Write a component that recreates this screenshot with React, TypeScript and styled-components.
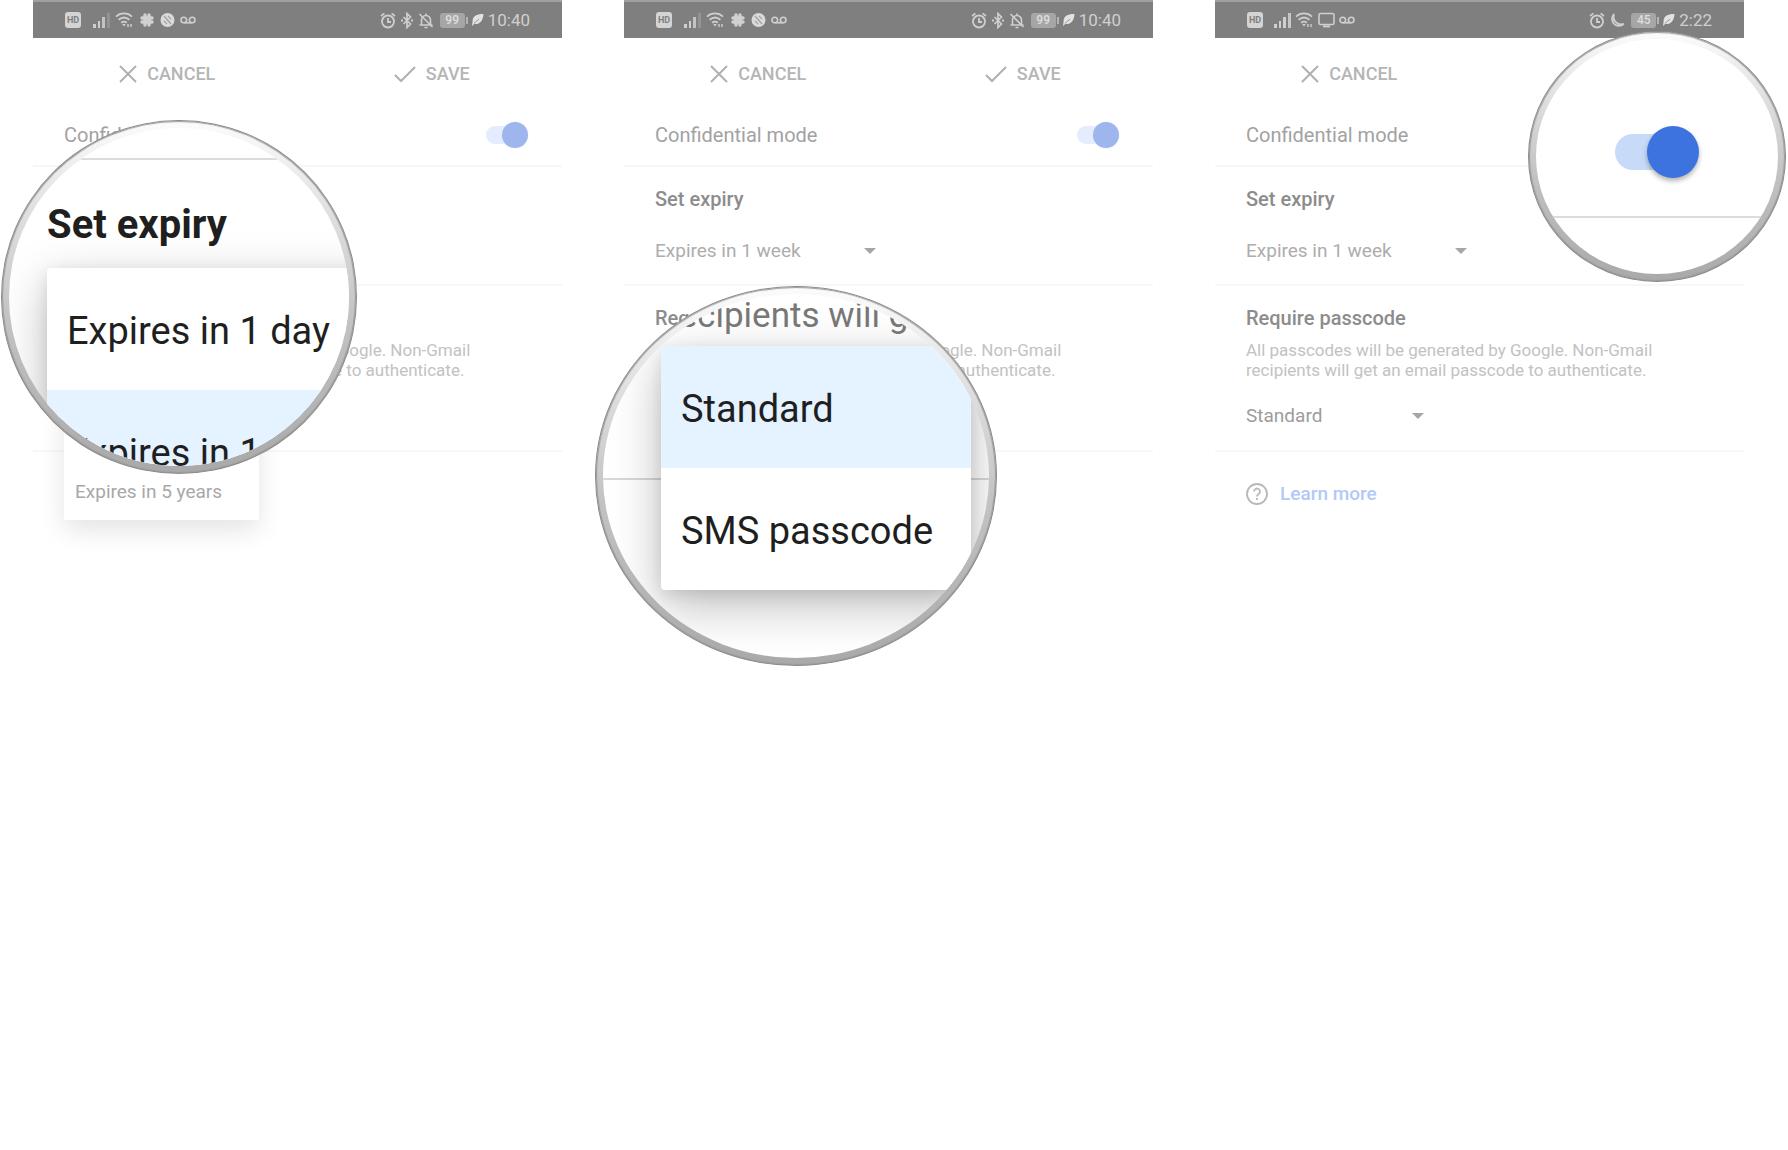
import React, { useId, useState } from "react";
import styled, { createGlobalStyle, css } from "styled-components";

const GlobalStyle = createGlobalStyle`
  *, *::before, *::after { box-sizing: border-box; }
  body {
    margin: 0;
    background: #ffffff;
    font-family: Roboto, "Liberation Sans", sans-serif;
    color: #8a8a8a;
  }
  button, select, input { font: inherit; color: inherit; }
  ul, p, h2 { margin: 0; padding: 0; }
  ul { list-style: none; }
`;

/* ---------- page ---------- */

const Board = styled.main`
  display: grid;
  grid-template-columns: repeat(3, minmax(0, 1fr));
  gap: 62px;
  padding: 0 44px 0 33px;
  min-height: 100vh;
`;

const Phone = styled.section`
  position: relative;
  min-width: 0;
`;

/* ---------- status bar ---------- */

const StatusBar = styled.header`
  display: flex;
  align-items: center;
  justify-content: space-between;
  height: 38px;
  padding: 0 32px;
  border-top: 2px solid #a0a0a0;
  background: #7f7f7f;
  color: #cfcfcf;
`;

const StatusGroup = styled.div<{ $gap: number }>`
  display: flex;
  align-items: center;
  gap: ${(p) => p.$gap}px;
  svg { display: block; }
`;

const Clock = styled.span`
  font-size: 17px;
  line-height: 20px;
`;

const Badge = styled.span`
  display: block;
  margin-right: 7px;
  width: 16px;
  height: 16px;
  border-radius: 3px;
  background: #d4d4d4;
  color: #7f7f7f;
  font-size: 9px;
  font-weight: 700;
  line-height: 16px;
  text-align: center;
`;

const Battery = styled.span`
  position: relative;
  width: 25px;
  height: 15px;
  margin: 0 2px;
  border-radius: 3px;
  background: #a6a6a6;
  color: #dedede;
  font-size: 12px;
  font-weight: 500;
  line-height: 15px;
  text-align: center;
  &::after {
    content: "";
    position: absolute;
    top: 4px;
    right: -3px;
    width: 2px;
    height: 7px;
    background: #b4b4b4;
  }
`;

const Signal = ({ full }: { full?: boolean }) => (
  <svg width="17" height="16" viewBox="0 0 17 16" fill="#cfcfcf">
    <rect x="0" y="12" width="3" height="4" />
    <rect x="5" y="9" width="2" height="7" />
    <rect x="9" y="5" width="3" height="11" opacity={full ? 1 : 0.85} />
    <rect x="14" y="1" width="3" height="15" opacity={full ? 0.9 : 0.25} />
  </svg>
);

const Wifi = () => (
  <svg width="19" height="16" viewBox="0 0 19 16" fill="none" stroke="#cfcfcf" strokeWidth="1.8">
    <path d="M1 4.6C5.6 .4 12.400 .4 17 4.600" />
    <path d="M3.600 7.800C7 4.900 11 4.900 14.400 7.800" />
    <path d="M6.200 10.700C8 9.300 10 9.300 11.800 10.700" />
    <path d="M7.200 12h3.600L9 14.600z" fill="#cfcfcf" stroke="none" />
    <path d="M13 15v-3M16 12v3" strokeWidth="1.400" />
  </svg>
);

const Slack = () => (
  <svg width="16" height="16" viewBox="0 0 16 16" stroke="#d2d2d2" strokeWidth="3.400" strokeLinecap="round">
    <path d="M6 3v10M10 3v10M3 6h10M3 10h10" />
  </svg>
);

const NoEntry = () => (
  <svg width="15" height="16" viewBox="0 0 15 16">
    <circle cx="7.500" cy="8" r="7" fill="#dadada" />
    <path d="M4 4l7 8M8 3.800l3 3.400M4 8.800l3 3.400" stroke="#a2a2a2" strokeWidth="1.200" />
  </svg>
);

const Screen = () => (
  <svg width="17" height="16" viewBox="0 0 17 16" fill="none" stroke="#cfcfcf" strokeWidth="1.600">
    <rect x="1" y="1.500" width="15" height="11" rx="1.500" />
    <path d="M5 14.400h7" strokeWidth="2" />
  </svg>
);

const Voicemail = () => (
  <svg width="16" height="16" viewBox="0 0 16 16" fill="none" stroke="#cfcfcf" strokeWidth="1.600">
    <circle cx="3.800" cy="8" r="2.800" />
    <circle cx="12.200" cy="8" r="2.800" />
    <path d="M3.800 10.800h8.400" />
  </svg>
);

const Alarm = () => (
  <svg width="16" height="17" viewBox="0 0 16 17" fill="none" stroke="#cfcfcf" strokeWidth="1.800">
    <circle cx="8" cy="9.500" r="6" />
    <path d="M8 6v4h3M1 4L4.400 1.400M15 4L11.600 1.400" />
  </svg>
);

const Bluetooth = () => (
  <svg width="14" height="17" viewBox="0 0 14 17" fill="none" stroke="#cfcfcf" strokeWidth="1.700">
    <path d="M3.500 5l7 7L7 15.500v-14L10.500 5l-7 7" />
    <path d="M1 8.500h2M11 8.500h2" strokeWidth="2" />
  </svg>
);

const BellOff = () => (
  <svg width="16" height="17" viewBox="0 0 16 17" fill="none" stroke="#cfcfcf" strokeWidth="1.600">
    <path d="M3.500 12.500V8a4.500 4.500 0 0 1 9 0v4.500M1.500 13h13M6.500 15.500h3M8 1.500v2M1.500 2l13 13" />
  </svg>
);

const Moon = () => (
  <svg width="16" height="17" viewBox="0 0 16 17" fill="none" stroke="#cfcfcf" strokeWidth="1.800">
    <path d="M5 2.200A6.800 6.800 0 1 0 14.800 11.800A7.600 7.600 0 0 1 5 2.200z" />
  </svg>
);

const Leaf = () => (
  <svg width="13" height="14" viewBox="0 0 13 14">
    <path d="M12.500 1C6 .8 1.500 3 1.600 8.200L1 13l2.200-2C9 11.500 12 8 12.500 1z" fill="#e2e2e2" />
    <path d="M3 10.500L8 6" stroke="#9a9a9a" strokeWidth="1" />
  </svg>
);

/* ---------- form parts ---------- */

const Actions = styled.div`
  display: grid;
  grid-template-columns: 1fr 1fr;
  height: 69px;
  padding-top: 2px;
`;

const ActionButton = styled.button`
  display: flex;
  align-items: center;
  justify-content: center;
  gap: 10px;
  border: 0;
  padding: 0 0 0 4px;
  background: none;
  color: #b5b5b5;
  font-size: 18px;
  font-weight: 500;
  line-height: 24px;
  cursor: pointer;
`;

const rowLine = css`
  border-bottom: 2px solid #f7f7f7;
`;

const ModeRow = styled.label`
  display: flex;
  align-items: center;
  justify-content: space-between;
  height: 60px;
  padding: 0 34px 2px 31px;
  font-size: 20px;
  line-height: 24px;
  color: #a2a2a2;
  ${rowLine}
`;

const Switch = styled.input.attrs({ type: "checkbox", role: "switch" })<{ $large?: boolean }>`
  appearance: none;
  flex: none;
  display: grid;
  align-items: center;
  justify-items: end;
  margin: 0;
  width: ${(p) => (p.$large ? 84 : 42)}px;
  height: ${(p) => (p.$large ? 52 : 26)}px;
  cursor: pointer;
  &::before, &::after {
    content: "";
    grid-area: 1 / 1;
  }
  &::before {
    justify-self: stretch;
    height: ${(p) => (p.$large ? 36 : 18)}px;
    margin-right: ${(p) => (p.$large ? 12 : 6)}px;
    border-radius: 18px;
    background: ${(p) => (p.$large ? "#c7dbf8" : "#e3edfd")};
  }
  &::after {
    width: ${(p) => (p.$large ? 52 : 26)}px;
    height: ${(p) => (p.$large ? 52 : 26)}px;
    border-radius: 50%;
    background: ${(p) => (p.$large ? "#3d73de" : "#9eb6ed")};
    box-shadow: ${(p) => (p.$large ? "0 3px 5px rgba(0, 0, 0, 0.3)" : "0 0 2px #dfe8fb")};
  }
  &:not(:checked) { justify-items: start; }
`;

const Field = styled.div<{ $bottom: number }>`
  display: flex;
  flex-direction: column;
  align-items: flex-start;
  padding: 20px 31px ${(p) => p.$bottom}px;
  ${rowLine}
`;

const FieldTitle = styled.label<{ $covered?: boolean }>`
  visibility: ${(p) => (p.$covered ? "hidden" : "visible")};
  font-size: 20px;
  font-weight: 500;
  line-height: 24px;
  color: #8c8c8c;
`;

const Note = styled.p`
  margin-top: 10px;
  max-width: 440px;
  font-size: 17px;
  line-height: 20px;
  color: #c2c2c2;
`;

const SelectBox = styled.div<{ $width: number; $top: number; $covered?: boolean }>`
  display: grid;
  align-items: center;
  width: ${(p) => p.$width}px;
  margin-top: ${(p) => p.$top}px;
  visibility: ${(p) => (p.$covered ? "hidden" : "visible")};
  svg, select { grid-area: 1 / 1; }
  svg { justify-self: end; pointer-events: none; }
`;

const Select = styled.select<{ $dark?: boolean }>`
  appearance: none;
  width: 100%;
  height: 24px;
  border: 0;
  padding: 0;
  background: none;
  font-size: 19px;
  line-height: 24px;
  color: ${(p) => (p.$dark ? "#9c9c9c" : "#adadad")};
`;

const Caret = () => (
  <svg width="12" height="6" viewBox="0 0 12 6">
    <path d="M0 0h12L6 6z" fill="#a6a6a6" />
  </svg>
);

const LearnMore = styled.a<{ $covered?: boolean }>`
  display: inline-flex;
  align-items: center;
  gap: 12px;
  margin: 30px 31px;
  visibility: ${(p) => (p.$covered ? "hidden" : "visible")};
  font-size: 19px;
  font-weight: 500;
  line-height: 24px;
  color: #b3c9f7;
  text-decoration: none;
`;

/* ---------- menus ---------- */

const Menu = styled.ul<{ $large?: boolean }>`
  border-radius: ${(p) => (p.$large ? 4 : 2)}px;
  background: #ffffff;
  box-shadow: ${(p) =>
    p.$large
      ? "0 16px 50px rgba(0, 0, 0, 0.26), 0 4px 16px rgba(0, 0, 0, 0.1)"
      : "0 10px 26px rgba(0, 0, 0, 0.11)"};
`;

const MenuItem = styled.button<{ $large?: boolean; $active?: boolean }>`
  display: block;
  width: 100%;
  height: ${(p) => (p.$large ? 122 : 60)}px;
  border: 0;
  padding: ${(p) => (p.$large ? "4px 20px 0" : "4px 11px 0")};
  background: ${(p) => (p.$active ? "#e5f2ff" : "transparent")};
  font-size: ${(p) => (p.$large ? 38 : 19)}px;
  line-height: ${(p) => (p.$large ? 44 : 24)}px;
  color: ${(p) => (p.$large ? "#1f1f1f" : "#a8a8a8")};
  text-align: left;
  white-space: nowrap;
`;

const PhoneMenu = styled.div`
  position: absolute;
  top: 220px;
  left: 31px;
  width: 195px;
  li:not(:last-child) { visibility: hidden; }
`;

/* ---------- magnifier ---------- */

const Lens = styled.div<{ $x: number; $y: number; $w: number; $h: number }>`
  position: absolute;
  z-index: 2;
  left: ${(p) => p.$x}px;
  top: ${(p) => p.$y}px;
  width: ${(p) => p.$w}px;
  height: ${(p) => p.$h}px;
  padding: 7px;
  border: 1px solid #8b8b8b;
  border-radius: 50%;
  background: linear-gradient(#fcfcfc 0%, #e6e6e6 20%, #c4c4c4 55%, #a9a9a9 100%);
  box-shadow: inset 0 0 1px 1px #9c9c9c;
`;

const Glass = styled.div`
  display: flex;
  flex-direction: column;
  width: 100%;
  height: 100%;
  overflow: hidden;
  border-radius: 50%;
  background: #ffffff;
`;

const GlassRule = styled.div<{ $top: number }>`
  flex: none;
  height: 2px;
  margin-top: ${(p) => p.$top}px;
  background: #dcdcdc;
`;

const GlassTitle = styled.h2`
  margin: 41px 0 0 38px;
  font-size: 40px;
  font-weight: 700;
  line-height: 48px;
  color: #1f1f1f;
`;

const GlassNote = styled.p`
  margin-left: 64px;
  font-size: 35px;
  line-height: 44px;
  color: #777777;
  white-space: nowrap;
`;

const GlassMenu = styled.div<{ $left: number; $top: number; $width: number }>`
  flex: none;
  width: ${(p) => p.$width}px;
  margin: ${(p) => p.$top}px 0 0 ${(p) => p.$left}px;
`;

const GlassBackdrop = styled.div`
  flex: 1;
  background: linear-gradient(#d8d8d8, #d8d8d8) 0 184px / 100% 2px no-repeat;
`;

const GlassSwitch = styled.div`
  flex: none;
  display: flex;
  padding: 87px 0 0 79px;
`;

/* ---------- composition ---------- */

const EXPIRY = ["Expires in 1 day", "Expires in 1 week", "Expires in 1 month", "Expires in 3 months", "Expires in 5 years"];
const PASSCODE = ["Standard", "SMS passcode"];

type Part = "expiry" | "passcodeTitle" | "passcode" | "learn";

function Options({ items, active, large, label }: { items: string[]; active?: string; large?: boolean; label: string }) {
  return (
    <Menu $large={large} aria-label={label}>
      {items.map((item) => (
        <li key={item}>
          <MenuItem type="button" $large={large} $active={item === active}>
            {item}
          </MenuItem>
        </li>
      ))}
    </Menu>
  );
}

function Status({ late }: { late?: boolean }) {
  return (
    <StatusBar>
      <StatusGroup $gap={late ? 4 : 5}>
        <Badge>HD</Badge>
        <Signal full={late} />
        <Wifi />
        {late ? <Screen /> : <><Slack /><NoEntry /></>}
        <Voicemail />
      </StatusGroup>
      <StatusGroup $gap={4}>
        <Alarm />
        {late ? <Moon /> : <><Bluetooth /><BellOff /></>}
        <Battery>{late ? "45" : "99"}</Battery>
        <Leaf />
        <Clock>{late ? "2:22" : "10:40"}</Clock>
      </StatusGroup>
    </StatusBar>
  );
}

/* `covered` lists the parts that lie entirely under an open menu or a magnifier. */
function ConfidentialScreen({ late, covered = [], children }: { late?: boolean; covered?: Part[]; children?: React.ReactNode }) {
  const id = useId();
  const [on, setOn] = useState(true);
  const under = (part: Part) => covered.includes(part);
  return (
    <Phone>
      <Status late={late} />
      <Actions>
        <ActionButton type="button">
          <svg width="18" height="18" viewBox="0 0 18 18" stroke="#b0b0b0" strokeWidth="2">
            <path d="M1 1l16 16M17 1L1 17" />
          </svg>
          CANCEL
        </ActionButton>
        <ActionButton type="button">
          <svg width="22" height="18" viewBox="0 0 22 18" fill="none" stroke="#b0b0b0" strokeWidth="2">
            <path d="M1 10l6 6L21 2" />
          </svg>
          SAVE
        </ActionButton>
      </Actions>
      <ModeRow>
        Confidential mode
        <Switch checked={on} onChange={(e) => setOn(e.target.checked)} />
      </ModeRow>
      <Field $bottom={21}>
        <FieldTitle $covered={under("expiry")} htmlFor={id + "e"}>Set expiry</FieldTitle>
        <SelectBox $covered={under("expiry")} $width={221} $top={28}>
          <Select id={id + "e"} defaultValue={EXPIRY[1]}>
            {EXPIRY.map((o) => <option key={o}>{o}</option>)}
          </Select>
          <Caret />
        </SelectBox>
      </Field>
      <Field $bottom={22}>
        <FieldTitle $covered={under("passcodeTitle")} htmlFor={id + "p"}>Require passcode</FieldTitle>
        <Note>
          All passcodes will be generated by Google. Non-Gmail recipients will get an email passcode to authenticate.
        </Note>
        <SelectBox $covered={under("passcode")} $width={178} $top={24}>
          <Select id={id + "p"} $dark defaultValue={PASSCODE[0]}>
            {PASSCODE.map((o) => <option key={o}>{o}</option>)}
          </Select>
          <Caret />
        </SelectBox>
      </Field>
      <LearnMore $covered={under("learn")} href="#learn-more">
        <svg width="22" height="22" viewBox="0 0 22 22" fill="none" stroke="#b8b8b8" strokeWidth="1.800">
          <circle cx="11" cy="11" r="10" />
          <path d="M8 8.600a3 3 0 1 1 4.600 2.500c-1.100.8-1.600 1.300-1.600 2.500M11 15v2" />
        </svg>
        Learn more
      </LearnMore>
      {children}
    </Phone>
  );
}

export default function App() {
  const [on, setOn] = useState(true);
  return (
    <>
      <GlobalStyle />
      <Board>
        <ConfidentialScreen covered={["expiry", "passcodeTitle", "passcode", "learn"]}>
          <PhoneMenu>
            <Options label="Expiry" items={EXPIRY} active={EXPIRY[1]} />
          </PhoneMenu>
          <Lens $x={-32} $y={120} $w={356} $h={354}>
            <Glass>
              <GlassRule $top={30} />
              <GlassTitle>Set expiry</GlassTitle>
              <GlassMenu $left={38} $top={19} $width={392}>
                <Options large label="Expiry, magnified" items={EXPIRY.slice(0, 2)} active={EXPIRY[1]} />
              </GlassMenu>
            </Glass>
          </Lens>
        </ConfidentialScreen>

        <ConfidentialScreen covered={["passcode", "learn"]}>
          <Lens $x={-29} $y={286} $w={402} $h={380}>
            <Glass>
              <GlassBackdrop>
                <GlassNote>recipients will get</GlassNote>
                <GlassMenu $left={58} $top={8} $width={310}>
                  <Options large label="Passcode, magnified" items={PASSCODE} active={PASSCODE[0]} />
                </GlassMenu>
              </GlassBackdrop>
            </Glass>
          </Lens>
        </ConfidentialScreen>

        <ConfidentialScreen late>
          <Lens $x={313} $y={31} $w={258} $h={251}>
            <Glass>
              <GlassSwitch>
                <Switch $large aria-label="Confidential mode, magnified" checked={on} onChange={(e) => setOn(e.target.checked)} />
              </GlassSwitch>
              <GlassRule $top={38} />
            </Glass>
          </Lens>
        </ConfidentialScreen>
      </Board>
    </>
  );
}
